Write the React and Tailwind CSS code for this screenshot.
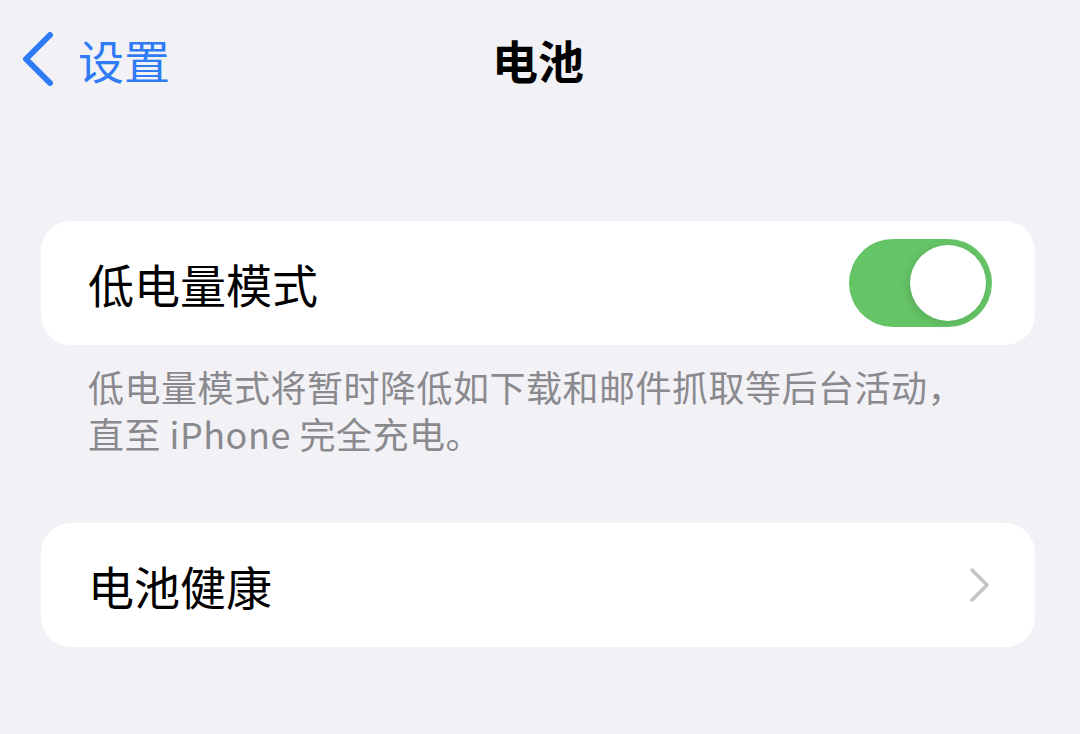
import { useState } from 'react';

const font = { fontFamily: '"Noto Sans CJK SC", "Noto Sans", sans-serif' };

function Toggle({ on, onChange }) {
  return (
    <button
      onClick={() => onChange(!on)}
      className={`flex h-[88px] w-[143px] items-center rounded-full p-[6px] ${
        on ? 'justify-end bg-[#65c466]' : 'justify-start bg-[#e9e9eb]'
      }`}
    >
      <span className="block h-[76px] w-[76px] rounded-full bg-white shadow-[-2px_2px_8px_rgba(0,0,0,0.12)]" />
    </button>
  );
}

export default function App() {
  const [lowPower, setLowPower] = useState(true);

  return (
    <div className="h-[734px] w-[1080px] overflow-hidden bg-[#f2f1f6]" style={font}>
      {/* nav bar */}
      <div className="grid h-[118px] grid-cols-[1fr_auto_1fr] items-center pr-[4px]">
        <div className="flex items-center gap-[24px] pl-[20px] text-[#2f7bf5]">
          <svg width="34" height="56" viewBox="0 0 34 56" fill="none">
            <path d="M30 4 L6 28 L30 52" stroke="currentColor" strokeWidth="6" strokeLinecap="round" strokeLinejoin="round" />
          </svg>
          <span className="text-[46px] leading-none">设置</span>
        </div>
        <h1 className="text-[46px] font-bold leading-none text-black">电池</h1>
        <div />
      </div>

      <div className="mt-[103px] pl-[41px] pr-[45px]">
        <div className="flex h-[124px] items-center justify-between rounded-[30px] bg-white pl-[47px] pr-[43px]">
          <span className="text-[46px] leading-none text-black">低电量模式</span>
          <Toggle on={lowPower} onChange={setLowPower} />
        </div>

        <p className="pl-[47px] pt-[18px] text-[36px] leading-[47px] tracking-[0.5px] text-[#8a8a8e]">
          低电量模式将暂时降低如下载和邮件抓取等后台活动，
          <br />
          直至 iPhone 完全充电。
        </p>

        <div className="mt-[66px] flex h-[124px] items-center justify-between rounded-[30px] bg-white pl-[47px] pr-[44px]">
          <span className="text-[46px] leading-none text-black">电池健康</span>
          <svg width="22" height="36" viewBox="0 0 22 36" fill="none">
            <path d="M3 3 L18 18 L3 33" stroke="#c4c4c7" strokeWidth="3.5" strokeLinecap="round" strokeLinejoin="round" />
          </svg>
        </div>
      </div>
    </div>
  );
}
